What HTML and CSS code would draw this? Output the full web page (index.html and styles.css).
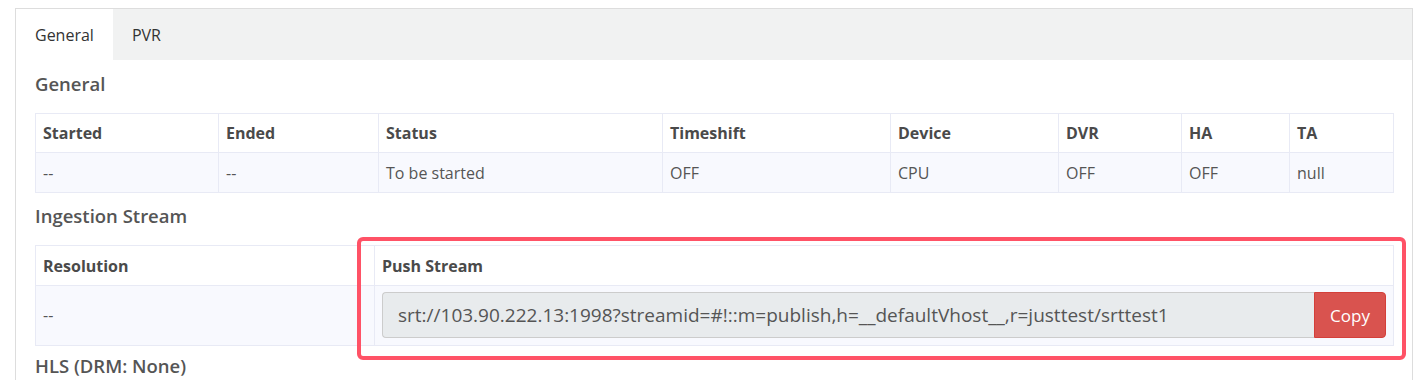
FILE: index.html
```html
<!DOCTYPE html>
<html lang="en">
<head>
    <meta charset="UTF-8">
    <title>Channel Detail</title>
    <link rel="stylesheet" href="styles.css">
</head>
<body>

    <div class="panel">
        <div class="tabs">
            <div class="tab active">General</div>
            <div class="tab">PVR</div>
        </div>

        <div class="content">
            <h3>General</h3>
            <table class="info-table">
                <thead>
                    <tr>
                        <th class="c-started">Started</th>
                        <th class="c-ended">Ended</th>
                        <th class="c-status">Status</th>
                        <th class="c-timeshift">Timeshift</th>
                        <th class="c-device">Device</th>
                        <th class="c-dvr">DVR</th>
                        <th class="c-ha">HA</th>
                        <th>TA</th>
                    </tr>
                </thead>
                <tbody>
                    <tr>
                        <td>--</td>
                        <td>--</td>
                        <td>To be started</td>
                        <td>OFF</td>
                        <td>CPU</td>
                        <td>OFF</td>
                        <td>OFF</td>
                        <td>null</td>
                    </tr>
                </tbody>
            </table>

            <h3 class="section-title">Ingestion Stream</h3>
            <div class="stream-wrap">
                <table class="info-table stream-table">
                    <thead>
                        <tr>
                            <th class="c-resolution">Resolution</th>
                            <th>Push Stream</th>
                        </tr>
                    </thead>
                    <tbody>
                        <tr>
                            <td>--</td>
                            <td class="input-cell">
                                <div class="input-group">
                                    <input type="text" class="stream-input" readonly value="srt://103.90.222.13:1998?streamid=#!::m=publish,h=__defaultVhost__,r=justtest/srttest1">
                                    <button class="copy-button">Copy</button>
                                </div>
                            </td>
                        </tr>
                    </tbody>
                </table>
                <div class="highlight"></div>
            </div>

            <h3 class="hls-title">HLS (DRM: None)</h3>
        </div>
    </div>

</body>
</html>
```

FILE: styles.css
```css
body {
    font-family: 'Open Sans', 'Noto Sans', sans-serif;
    margin: 8px 12px 0 15px;
    color: #555;
    background: #fff;
    overflow: hidden;
}

.panel {
    border: 1px solid #ddd;
    border-bottom: none;
    height: 372px;
}

.tabs {
    display: flex;
    background-color: #f1f2f2;
    height: 51px;
}

.tab {
    padding: 0 19px;
    line-height: 52px;
    font-size: 16px;
    color: #333;
}

.tab.active {
    background-color: #fff;
}

.content {
    padding: 0 18px 0 19px;
}

h3 {
    font-size: 18.5px;
    font-weight: 600;
    line-height: 24px;
    margin: 12px 0 17px 0;
    color: #555;
}

.section-title {
    margin-top: 11px;
    margin-bottom: 17px;
}

.hls-title {
    margin-top: 8px;
}

.info-table {
    width: 100%;
    border-collapse: collapse;
    font-size: 16px;
    table-layout: fixed;
}

.info-table th,
.info-table td {
    border: 1px solid #e8eaf5;
    padding: 9px 7px 8px 7px;
    line-height: 22px;
    text-align: left;
}

.info-table th {
    font-weight: 700;
    color: #4a4a4a;
    background-color: #fff;
    padding-top: 8px;
}

.info-table td {
    background-color: #f8f9fe;
    color: #555;
}

/* column widths are content widths: cell width minus padding and border */
.c-started { width: 168px; }
.c-ended { width: 145px; }
.c-status { width: 269px; }
.c-timeshift { width: 213px; }
.c-device { width: 153px; }
.c-dvr { width: 108px; }
.c-ha { width: 93px; }
.c-resolution { width: 324px; }

.stream-table th {
    padding-top: 9px;
}

.stream-table td {
    padding-top: 6px;
    padding-bottom: 7px;
}

.stream-wrap {
    position: relative;
}

.input-group {
    display: flex;
    height: 46px;
}

.stream-input {
    flex: 1;
    min-width: 0;
    font-family: 'Open Sans', 'Noto Sans', sans-serif;
    font-size: 19px;
    color: #555;
    background-color: #e8ebed;
    border: 1px solid #ccc;
    border-right: none;
    border-radius: 4px 0 0 4px;
    padding: 0 15px;
    margin: 0;
    outline: none;
}

.copy-button {
    width: 72px;
    font-family: 'Open Sans', 'Noto Sans', sans-serif;
    font-size: 17px;
    color: #fff;
    background-color: #d9534f;
    border: 1px solid #d43f3a;
    border-radius: 0 4px 4px 0;
    margin: 0;
    cursor: pointer;
}

.highlight {
    position: absolute;
    top: -8px;
    left: 322px;
    right: -12px;
    bottom: -14px;
    border: 4px solid #ff5266;
    border-radius: 6px;
    pointer-events: none;
}
```
